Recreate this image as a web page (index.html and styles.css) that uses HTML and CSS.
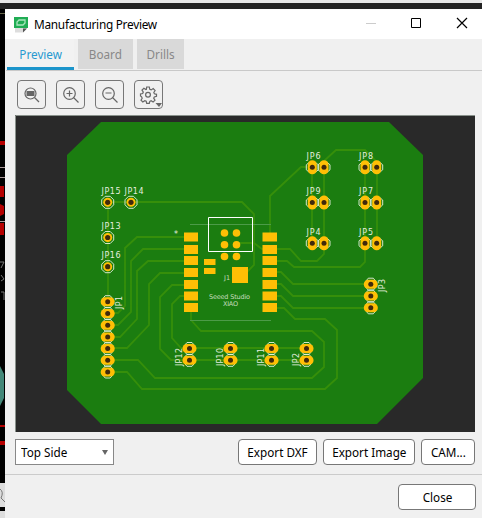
FILE: index.html
```
<!DOCTYPE html>
<html lang="en">
<head>
<meta charset="utf-8">
<title>Manufacturing Preview</title>
<link rel="stylesheet" href="styles.css">
</head>
<body>
<svg class="backdrop" width="5" height="509" viewBox="0 9 5 509">
  <path fill="#000" d="M0 9h5v509H0z"/>
  <path stroke="#66664a" d="M0 13.500h5"/>
  <path stroke="#a99" d="M0 167.500h5M0 177.500h5M0 221.500h5"/>
  <path fill="#b50000" d="M0 141h5v4H0zM0 186h4v11H0zM0 204l4 2v8l-4 2zM0 223h4v12H0zM0 425h5v2H0zM0 441h5v4H0z"/>
  <path stroke="#777" fill="none" d="M0 262h4l-3 6M1 275l3 4-3 2M1 292h3v8"/>
  <path fill="#448879" d="M0 366l4 8v24l-4 8z"/>
  <path fill="#ddd" d="M0 483h5v24H0zM0 511h5v7H0z"/>
  <path stroke="#777" fill="none" d="M0 489q4 3 1 9M1 498l4 4"/>
</svg>
<main class="window">
  <header class="titlebar">
    <svg class="logo" width="14" height="16" viewBox="0 0 14 16"><path fill="#20ad54" d="M0 0h14v11H0z"/><path fill="#ddd" d="M1 11h12l-4 4.500H1z"/><path fill="#555" d="M9 11.500h4l-4 4z"/><path fill="none" stroke="#a9e5bd" stroke-width="1.300" d="M3 8V5l2-2h6v3L9 8z"/></svg>
    <h1>Manufacturing Preview</h1>
    <svg class="controls" width="100" height="12" viewBox="0 0 100 12" fill="none"><path stroke="#ccc" d="M0 6.500h10"/><path stroke="#000" d="M45.500 1.500h9v9h-9z"/><path stroke="#000" stroke-width="1.200" d="M91 1l10 10M101 1L91 11"/></svg>
  </header>
  <nav class="tabs"><span class="tab active"><b>Preview</b></span><span class="tab board-tab"><b>Board</b></span><span class="tab drills-tab"><b>Drills</b></span></nav>
  <div class="toolbar">
    <button aria-label="Zoom to fit"><svg viewBox="0 0 27 27"><circle cx="12.500" cy="12.500" r="5.500"/><path d="M16.500 16.500l4.500 4.500"/><path class="solid" d="M8.500 10h8v5h-8z"/></svg></button>
    <button aria-label="Zoom in"><svg viewBox="0 0 27 27"><circle cx="12.500" cy="12.500" r="5.800"/><path d="M16.500 16.500l5 5M9.500 12.500h6M12.500 9.500v6"/></svg></button>
    <button aria-label="Zoom out"><svg viewBox="0 0 27 27"><circle cx="12.500" cy="12.500" r="5.800"/><path d="M16.500 16.500l5 5M9.500 12h6"/></svg></button>
    <button aria-label="Settings"><svg viewBox="0 0 27 27"><path d="M11.700 6h2.600l.5 2.300 1.400.6 2-1.300 1.900 1.900-1.300 2 .6 1.300 2.100.5v2l-2.200.6-.6 1.300 1.300 2-1.900 1.900-2-1.300-1.300.6-.5 1.900h-2.600l-.5-2-1.400-.6-2 1.300-1.800-1.800 1.200-2-.6-1.400L5.500 15v-2l2.200-.5.6-1.400-1.300-2L8.900 7.300l2 1.200.5-.2z"/><circle cx="13" cy="13.800" r="2.400"/><path class="solid" d="M20.500 22h6.500l-3 4z"/></svg></button>
  </div>
  <svg class="preview" width="460" height="317" viewBox="15 115 460 317">
    <defs>
      <g id="ring"><path class="silk" d="M-2.500-6h5L6-2.500v5L2.500 6h-5L-6 2.500v-5z"/><circle class="copper" r="4.500"/><circle class="hole" r="2.600"/></g>
      <g id="wide"><path class="silk" d="M-5-3L-2.500-6h5L5-3M-5 3l2.500 3h5L5 3"/><rect class="copper" x="-7" y="-4.500" width="14" height="9" rx="4.300"/><circle class="hole" r="2.500"/></g>
      <g id="tall"><path class="silk" d="M-3-5L-6-2.500v5L-3 5M3-5l3 2.500v5L3 5"/><rect class="copper" x="-4.500" y="-7" width="9" height="14" rx="4.300"/><circle class="hole" r="2.500"/></g>
    </defs>
    <path fill="#292929" d="M15 115h460v317H15z"/>
    <path fill="#1b7d10" d="M101 122h288l34 33v223l-46 46H101l-34-34V155z"/>
    <g class="trace">
      <path d="M108 202h134l12 12v51l-7 7M108 202v100"/>
      <path d="M108 313h10l7-7v-58l12-11h53M108 325h10l13-13v-51l12-12h47M108 337h12l17-18v-48l11-10h42M108 348h19l22-23v-41l11-11h30"/>
      <path d="M108 360h30l17 18h157l12-11v-25l-12-11H201l-10-11v-12M108 372h19l15 17h183l12-11v-48l-12-11h-30l-11-11h-14"/>
      <path d="M190 285h-18l-12 12v52l11 11h135M190 296h-10l-8 8v34l9 10h125"/>
      <path d="M270 237v-41l31-29h11v76M324 243v-82l12-11h29l12 12v81M365 167v95l-5 5h-66l-7-6h-17M237 243h17l8 6h28l11 12h16l7-7v-11"/>
      <path d="M270 272h11l12 12h78M270 284h11l12 12h78M270 296h11l12 12h78"/>
    </g>
    <path stroke="#4c9b48" d="M190 224.500h81M190 320.500h81"/>
    <path class="pads" d="M184 232.500h14v9h-14zM184 245h14v9h-14zM184 256h14v9h-14zM184 268h14v9h-14zM184 280h14v9h-14zM184 291.500h14v9h-14zM184 303h14v9h-14zM262.500 232.500h14.500v9h-14.500zM262.500 245h14.500v9h-14.500zM262.500 256h14.500v9h-14.500zM262.500 268h14.500v9h-14.500zM262.500 280h14.500v9h-14.500zM262.500 291.500h14.500v9h-14.500zM262.500 303h14.500v9h-14.500zM204 259h11.500v6H204zM204 268h11.500v6H204zM232 267h16v16h-16z"/>
    <path fill="none" stroke="#fff" d="M208.500 217.500h44v34h-44z"/>
    <g class="copper"><circle cx="224.500" cy="233" r="3.800"/><circle cx="236.500" cy="233" r="3.800"/><circle cx="224.500" cy="244.700" r="3.800"/><circle cx="236.500" cy="244.700" r="3.800"/><circle cx="224.500" cy="256.500" r="3.800"/><circle cx="236.500" cy="256.500" r="3.800"/></g>
    <use href="#ring" x="107.700" y="202.300"/><use href="#ring" x="131" y="202.300"/><use href="#ring" x="107.700" y="237.500"/><use href="#ring" x="107.700" y="266.700"/>
    <use href="#wide" x="107.700" y="301.700"/><use href="#wide" x="107.700" y="313.400"/><use href="#wide" x="107.700" y="325.200"/><use href="#wide" x="107.700" y="336.900"/><use href="#wide" x="107.700" y="348.600"/><use href="#wide" x="107.700" y="360.300"/><use href="#wide" x="107.700" y="372"/>
    <use href="#wide" x="189.500" y="348.500"/><use href="#wide" x="189.500" y="360.300"/><use href="#wide" x="230.500" y="348.500"/><use href="#wide" x="230.500" y="360.300"/><use href="#wide" x="271.500" y="348.500"/><use href="#wide" x="271.500" y="360.300"/><use href="#wide" x="306.500" y="348.500"/><use href="#wide" x="306.500" y="360.300"/>
    <use href="#wide" x="370.800" y="284.200"/><use href="#wide" x="370.800" y="296"/><use href="#wide" x="370.800" y="307.800"/>
    <use href="#tall" x="312.300" y="167.300"/><use href="#tall" x="324" y="167.300"/><use href="#tall" x="365" y="167.300"/><use href="#tall" x="376.700" y="167.300"/>
    <use href="#tall" x="312.300" y="202.500"/><use href="#tall" x="324" y="202.500"/><use href="#tall" x="365" y="202.500"/><use href="#tall" x="376.700" y="202.500"/>
    <use href="#tall" x="312.300" y="243.300"/><use href="#tall" x="324" y="243.300"/><use href="#tall" x="365" y="243.300"/><use href="#tall" x="376.700" y="243.300"/>
    <g class="labels">
      <text x="101.500" y="194" textLength="19">JP15</text><text x="124.500" y="194" textLength="19">JP14</text><text x="101.500" y="229" textLength="19">JP13</text><text x="101.500" y="258" textLength="19">JP16</text>
      <text x="306.500" y="159" textLength="14">JP6</text><text x="359" y="159" textLength="14">JP8</text><text x="306.500" y="194" textLength="14">JP9</text><text x="359" y="194" textLength="14">JP7</text><text x="306.500" y="235" textLength="14">JP4</text><text x="359" y="235" textLength="14">JP5</text>
      <text transform="translate(122 309) rotate(-90)" textLength="13">JP1</text><text transform="translate(181.500 366) rotate(-90)" textLength="18">JP12</text><text transform="translate(222.500 366) rotate(-90)" textLength="18">JP10</text><text transform="translate(263.500 366) rotate(-90)" textLength="18">JP11</text><text transform="translate(298.500 366) rotate(-90)" textLength="13">JP2</text><text transform="translate(385 292) rotate(-90)" textLength="13">JP3</text>
      <text class="faint" x="224" y="280">J1</text><text class="faint" x="209" y="299" textLength="41">Seeed Studio</text><text class="faint" x="223" y="306" textLength="15">XIAO</text><text x="174" y="237">*</text>
    </g>
    <path fill="none" stroke="#89918b" d="M15.500 432V115.500H475"/>
  </svg>
  <div class="actions">
    <div class="select"><b>Top Side</b><i></i></div>
    <button class="dxf"><b>Export DXF</b></button><button class="image"><b>Export Image</b></button><button class="cam"><b>CAM...</b></button>
  </div>
  <footer><button><b>Close</b></button></footer>
</main>
</body>
</html>
```
FILE: styles.css
```
* { box-sizing: border-box; }
body {
  margin: 0;
  width: 482px;
  height: 518px;
  overflow: hidden;
  display: grid;
  grid-template-columns: 5px 477px;
  border-top: 3px solid #e8e8e8;
  background: #242424;
  padding-top: 6px;
  font: 13px/16px "Noto Sans", sans-serif;
  color: #000;
}
svg { display: block; }
b { display: block; font-weight: 400; white-space: nowrap; transform: scaleX(.9); }
.window { background: #f0f0f0; height: 509px; }
.titlebar { height: 30px; background: #fff; display: flex; align-items: center; padding: 0 14px 0 9px; }
.logo { margin-top: 1px; }
h1 { font: 13px/18px "Noto Sans", sans-serif; margin: 0 auto 0 6px; white-space: nowrap; letter-spacing: -.3px; transform: scaleX(.91); transform-origin: left; }
.controls { overflow: visible; margin-right: 2px; margin-top: -2px; }
.tabs { height: 32px; border-bottom: 1px solid #c9c9c9; display: flex; align-items: flex-start; margin-left: 1px; }
.tab { height: 30px; background: #d9d9d9; color: #888; display: flex; align-items: center; justify-content: center; margin-left: 4px; width: 55px; }
.tab.active { width: 67px; margin-left: 1px; height: 31px; background: #f2f2f2; color: #2799d0; border-bottom: 3px solid #1c95cb; padding-top: 2px; }
.drills-tab { width: 47px; }
.toolbar { height: 44px; padding: 9px 0 0 12px; display: flex; gap: 10px; }
button { font: inherit; color: #000; border: 1px solid #777; border-radius: 4px; background: #fff; padding: 0; display: flex; align-items: center; justify-content: center; }
.toolbar button { width: 29px; height: 29px; background: #f0f0f0; }
.toolbar svg { width: 27px; height: 27px; fill: none; stroke: #666; stroke-width: 1.2; }
.toolbar .solid { fill: #666; stroke: none; }
.preview { margin-left: 10px; }
.trace { fill: none; stroke: #368f0a; stroke-width: 1.8; }
.silk { fill: none; stroke: #e9f2df; stroke-width: .9; }
.copper, .pads { fill: #ffbf05; }
.hole { fill: #40290c; }
.labels { font: 8px "DejaVu Sans", sans-serif; fill: #e4eedf; }
.faint { font-size: 6.5px; fill: #c5dcbe; }
.actions { display: flex; gap: 6px; padding: 7px 7px 0 10px; height: 43px; border-bottom: 1px solid #cbcbcb; }
.actions button, .select { height: 26px; }
.select { width: 99px; border: 1px solid #888; background: #fff; display: flex; align-items: center; justify-content: space-between; padding: 0 5px; margin-right: auto; }
.select b { transform-origin: left; }
.select i { border: 3px solid transparent; border-top: 5px solid #666; border-bottom: 0; }
.dxf { width: 79px; }
.image { width: 92px; }
.cam { width: 54px; }
footer { display: flex; justify-content: flex-end; padding: 9px 6px 0 0; }
footer button { width: 78px; height: 26px; }
```
